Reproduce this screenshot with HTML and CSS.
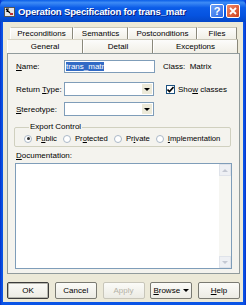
FILE: index.html
```html
<!DOCTYPE html>
<html>
<head>
<meta charset="utf-8">
<link rel="stylesheet" href="styles.css">
</head>
<body>
<div class="window">
  <div class="titlebar">
    <svg class="appicon" width="11" height="10" viewBox="0 0 11 10">
      <rect x="0.5" y="0.5" width="10" height="9" fill="#e8e8e8" stroke="#555"/>
      <path d="M2 2 L6 6 M3 2 L3 5 M2 2 L5 2" stroke="#000" stroke-width="1.2" fill="none"/>
      <rect x="6" y="6" width="3" height="2" fill="#c03030"/>
    </svg>
    <span class="title">Operation Specification for trans_matr</span>
    <span class="tbtn help">?</span>
    <span class="tbtn close">
      <svg width="8" height="8" viewBox="0 0 8 8"><path d="M1 1 L7 7 M7 1 L1 7" stroke="#fff" stroke-width="1.8"/></svg>
    </span>
  </div>
  <div class="client">
    <div class="tabrow back">
      <div class="tab w-pre">Preconditions</div>
      <div class="tab w-sem">Semantics</div>
      <div class="tab w-post">Postconditions</div>
      <div class="tab w-files">Files</div>
    </div>
    <div class="tabrow front">
      <div class="tab sel w-gen">General</div>
      <div class="tab w-det">Detail</div>
      <div class="tab w-exc">Exceptions</div>
    </div>
    <div class="panel">
      <div class="row r-name">
        <span class="lbl"><u>N</u>ame:</span>
        <span class="input name"><span class="selected">trans_matr</span></span>
        <span class="extra">Class:&nbsp; Matrix</span>
      </div>
      <div class="row r-ret">
        <span class="lbl">Return <u>T</u>ype:</span>
        <span class="combo"><span class="drop"><i class="arrow"></i></span></span>
        <span class="extra chk"><span class="checkbox"><svg width="7" height="7" viewBox="0 0 7 7"><path d="M0.5 3.5 L2.5 5.5 L6.5 1" stroke="#000" stroke-width="1.6" fill="none"/></svg></span><span>Sho<u>w</u> classes</span></span>
      </div>
      <div class="row r-st">
        <span class="lbl"><u>S</u>tereotype:</span>
        <span class="combo"><span class="drop"><i class="arrow"></i></span></span>
      </div>
      <fieldset class="group">
        <legend>Export Control</legend>
        <span class="radio on"></span><span class="rl">P<u>u</u>blic</span>
        <span class="radio"></span><span class="rl">Pr<u>o</u>tected</span>
        <span class="radio"></span><span class="rl">Pr<u>i</u>vate</span>
        <span class="radio"></span><span class="rl last"><u>I</u>mplementation</span>
      </fieldset>
      <div class="doclbl"><u>D</u>ocumentation:</div>
      <div class="textarea">
        <div class="vscroll">
          <span class="sbtn"><i class="up"></i></span>
          <span class="track"></span>
          <span class="sbtn"><i class="down"></i></span>
        </div>
      </div>
    </div>
    <div class="buttons">
      <span class="btn default">OK</span>
      <span class="btn">Cancel</span>
      <span class="btn disabled">Apply</span>
      <span class="btn"><span><u>B</u>rowse</span><i class="arrow"></i></span>
      <span class="btn"><span><u>H</u>elp</span></span>
    </div>
  </div>
</div>
</body>
</html>
```

FILE: styles.css
```css
html, body {
  margin: 0;
  padding: 0;
  background: #ffffff;
}
body {
  font-family: "Liberation Sans", Arial, sans-serif;
  font-size: 8px;
  color: #000;
}
.window {
  width: 246px;
  height: 305px;
  box-sizing: border-box;
  background: linear-gradient(90deg, #0831c8, #0a54e6 2px, #0a54e6 244px, #0831c8);
  padding: 0 3px 3px 3px;
  display: flex;
  flex-direction: column;
}
.titlebar {
  height: 22px;
  margin: 0 -3px;
  padding: 0 4px 0 4px;
  display: flex;
  align-items: center;
  background: linear-gradient(180deg, #0a5ee8 0%, #3d8bf5 12%, #0b5ce8 35%, #0553e0 70%, #0447c8 100%);
  border-radius: 6px 6px 0 0;
}
.appicon {
  flex: none;
  margin-top: 1px;
}
.title {
  margin-left: 3px;
  color: #fff;
  font-weight: bold;
  font-size: 9.6px;
  letter-spacing: -0.2px;
  flex: 1;
  white-space: nowrap;
  text-shadow: 1px 1px 0 #0a1e7a;
}
.tbtn {
  width: 14px;
  height: 14px;
  box-sizing: border-box;
  border: 1px solid #fff;
  border-radius: 2px;
  display: flex;
  align-items: center;
  justify-content: center;
  color: #fff;
  font-weight: bold;
  font-size: 11px;
  margin-left: 2px;
}
.tbtn.help {
  background: linear-gradient(135deg, #6ea2f8, #2a68e6);
}
.tbtn.close {
  background: linear-gradient(135deg, #f08a6a, #d0401a);
  margin-right: 2px;
}
.client {
  flex: 1;
  background: #ece9d8;
  display: flex;
  flex-direction: column;
  padding: 5px 2px 0 4px;
}
.tabrow {
  display: flex;
  position: relative;
}
.tabrow.back {
  height: 12px;
  padding-left: 3px;
}
.tabrow.front {
  height: 14px;
}
.tab {
  box-sizing: border-box;
  background: linear-gradient(180deg, #fcfcfb, #f1efe6);
  border-top: 1px solid #c9c6b8;
  border-left: 1px solid #fff;
  border-right: 1px solid #8a887a;
  text-align: center;
  white-space: nowrap;
  line-height: 11px;
}
.tabrow.front .tab {
  line-height: 13px;
}
.tab.sel {
  background: #f7f6f1;
  border-top: 1px solid #d8d4c4;
}
.w-pre { width: 63px; }
.w-sem { width: 55px; }
.w-post { width: 69px; }
.w-files { width: 40px; }
.w-gen { width: 76px; }
.w-det { width: 70px; }
.w-exc { width: 85px; }
.panel {
  height: 221px;
  box-sizing: border-box;
  width: 233px;
  border: 1px solid #919b9c;
  background: #f4f3ee;
  padding: 6px 7px 0 7px;
  display: flex;
  flex-direction: column;
}
.row {
  display: flex;
  align-items: center;
  height: 14px;
}
.r-name { height: 13px; }
.r-ret { margin-top: 9px; }
.r-st { margin-top: 6px; }
.lbl {
  width: 48px;
  padding-left: 1px;
  flex: none;
}
.input {
  width: 91px;
  height: 13px;
  box-sizing: border-box;
  border: 1px solid #7f9db9;
  background: #fff;
  display: flex;
  align-items: center;
  padding-left: 1px;
}
.selected {
  background: #316ac5;
  color: #fff;
  line-height: 9px;
}
.combo {
  width: 90px;
  height: 14px;
  box-sizing: border-box;
  border: 1px solid #7f9db9;
  background: #fff;
  display: flex;
  justify-content: flex-end;
  padding: 1px;
}
.drop {
  width: 10px;
  background: #ece9d8;
  border-left: 1px solid #fff;
  display: flex;
  align-items: center;
  justify-content: center;
}
.arrow {
  display: inline-block;
  width: 0;
  height: 0;
  border-left: 3px solid transparent;
  border-right: 3px solid transparent;
  border-top: 3px solid #000;
}
.extra {
  margin-left: 8px;
  white-space: nowrap;
}
.chk {
  display: flex;
  align-items: center;
  margin-left: 12px;
}
.checkbox {
  width: 9px;
  height: 9px;
  box-sizing: border-box;
  border: 1px solid #1c5180;
  background: #fff;
  display: flex;
  align-items: center;
  justify-content: center;
  margin-right: 3px;
}
.group {
  margin: 7px 1px 0 -1px;
  padding: 3px 0 4px 9px;
  border: 1px solid #d0d0bf;
  border-radius: 2px;
  height: 24px;
  box-sizing: border-box;
  display: flex;
  align-items: center;
  min-width: 0;
  font-size: 7.7px;
}
.group legend {
  padding: 0 1px;
  margin-left: 5px;
  line-height: 8px;
  font-size: 8px;
}
.radio {
  width: 6px;
  height: 6px;
  border: 1px solid #aab8c8;
  border-radius: 50%;
  background: #fff;
  flex: none;
  display: flex;
  align-items: center;
  justify-content: center;
}
.radio.on::after {
  content: "";
  width: 3px;
  height: 3px;
  border-radius: 50%;
  background: #333;
}
.rl {
  margin-left: 4px;
  margin-right: 6px;
  white-space: nowrap;
}
.rl.last {
  margin-right: 0;
}
.doclbl {
  margin-top: 4px;
  padding-left: 1px;
  line-height: 10px;
}
.textarea {
  margin-top: 2px;
  height: 106px;
  box-sizing: border-box;
  border: 1px solid #7f9db9;
  background: #fff;
  display: flex;
  justify-content: flex-end;
}
.vscroll {
  width: 12px;
  display: flex;
  flex-direction: column;
  background: #f6f6f2;
}
.sbtn {
  height: 12px;
  background: #eef0f4;
  border: 1px solid #dfe3ea;
  box-sizing: border-box;
  display: flex;
  align-items: center;
  justify-content: center;
}
.track {
  flex: 1;
}
.up, .down {
  display: inline-block;
  width: 0;
  height: 0;
  border-left: 3px solid transparent;
  border-right: 3px solid transparent;
}
.up { border-bottom: 3px solid #c4c8d2; }
.down { border-top: 3px solid #c4c8d2; }
.buttons {
  margin-top: 8px;
  display: flex;
  justify-content: space-between;
  width: 233px;
}
.btn {
  width: 42px;
  height: 17px;
  box-sizing: border-box;
  border: 1px solid #7a7a72;
  border-radius: 2px;
  background: linear-gradient(180deg, #fbfbf8, #ecebe4);
  display: flex;
  align-items: center;
  justify-content: center;
  gap: 3px;
}
.btn.default {
  border: 1px solid #3c3c3c;
  box-shadow: inset 0 0 0 1px #b8b8b0;
}
.btn.disabled {
  color: #b4b2a6;
  border-color: #c8c6ba;
}
```
